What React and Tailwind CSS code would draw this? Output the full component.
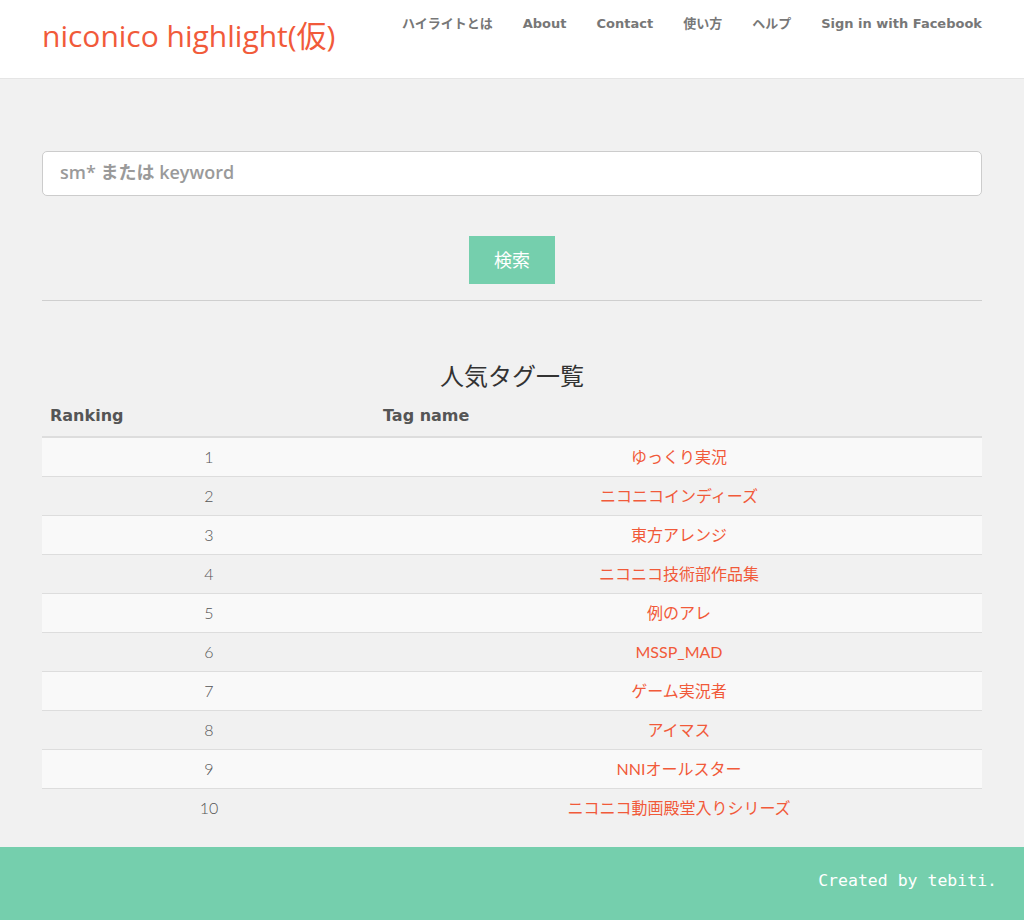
import React from 'react';

const navItems = ['ハイライトとは', 'About', 'Contact', '使い方', 'ヘルプ', 'Sign in with Facebook'];

const tags = [
  'ゆっくり実況',
  'ニコニコインディーズ',
  '東方アレンジ',
  'ニコニコ技術部作品集',
  '例のアレ',
  'MSSP_MAD',
  'ゲーム実況者',
  'アイマス',
  'NNIオールスター',
  'ニコニコ動画殿堂入りシリーズ',
];

const App = () => {
  return (
    <div className="min-h-[920px] flex flex-col bg-[#f1f1f1] font-['Open_Sans','Noto_Sans_CJK_JP',sans-serif]">
      {/* Header */}
      <header className="bg-white border-b border-[#e5e5e5] h-[79px]">
        <div className="w-[970px] mx-auto px-[15px] flex justify-between">
          <a className="text-[30px] text-[#f15a3a] leading-none pt-[21px] whitespace-nowrap">niconico highlight(仮)</a>
          <nav className="flex -mr-[15px]">
            {navItems.map((item) => (
              <a
                key={item}
                className="px-[15px] pt-[15px] text-[13px] font-bold text-[#777] font-['DejaVu_Sans','Noto_Sans_CJK_JP',sans-serif] leading-[18px] whitespace-nowrap"
              >
                {item}
              </a>
            ))}
          </nav>
        </div>
      </header>

      {/* Main */}
      <main className="flex-1 w-[970px] mx-auto px-[15px] pt-[72px]">
        <input
          type="text"
          placeholder="sm* または keyword"
          className="w-full h-[45px] bg-white border border-[#cccccc] rounded-[5px] px-[17px] pb-[3px] text-[18px] font-semibold placeholder:text-[#9a9a9a] outline-none"
        />
        <div className="flex justify-center mt-[40px]">
          <button className="w-[86px] h-[48px] bg-[#75cfad] text-white text-[18px]">検索</button>
        </div>
        <hr className="mt-[16px] border-t border-[#cfcfcf]" />

        <h2 className="mt-[60px] text-center text-[24px] text-[#333] leading-[30px]">人気タグ一覧</h2>

        <table className="w-full mt-[4px] mb-[20px] border-collapse">
          <thead>
            <tr className="border-b-2 border-[#dddddd]">
              <th className="w-[334px] text-left px-[8px] h-[42px] text-[16px] font-bold text-[#555] font-['DejaVu_Sans',sans-serif]">Ranking</th>
              <th className="text-left px-[7px] h-[42px] text-[16px] font-bold text-[#555] font-['DejaVu_Sans',sans-serif]">Tag name</th>
            </tr>
          </thead>
          <tbody>
            {tags.map((tag, i) => (
              <tr
                key={tag}
                className={`${i % 2 === 0 ? 'bg-[#f9f9f9]' : ''} ${i < tags.length - 1 ? 'border-b border-[#dddddd]' : ''}`}
              >
                <td className="h-[39px] text-center text-[16px] font-light text-[#555] font-['Lato',sans-serif]">{i + 1}</td>
                <td className="h-[39px] text-center text-[16px] text-[#f15a3a] font-['Lato','Noto_Sans_CJK_JP',sans-serif]">
                  <a>{tag}</a>
                </td>
              </tr>
            ))}
          </tbody>
        </table>
      </main>

      {/* Footer */}
      <footer className="bg-[#75cfad] h-[73px] flex items-center justify-end pr-[27px] pb-[4px]">
        <span className="text-white text-[16.5px] font-['DejaVu_Sans_Mono',monospace]">Created by tebiti.</span>
      </footer>
    </div>
  );
};

export default App;
